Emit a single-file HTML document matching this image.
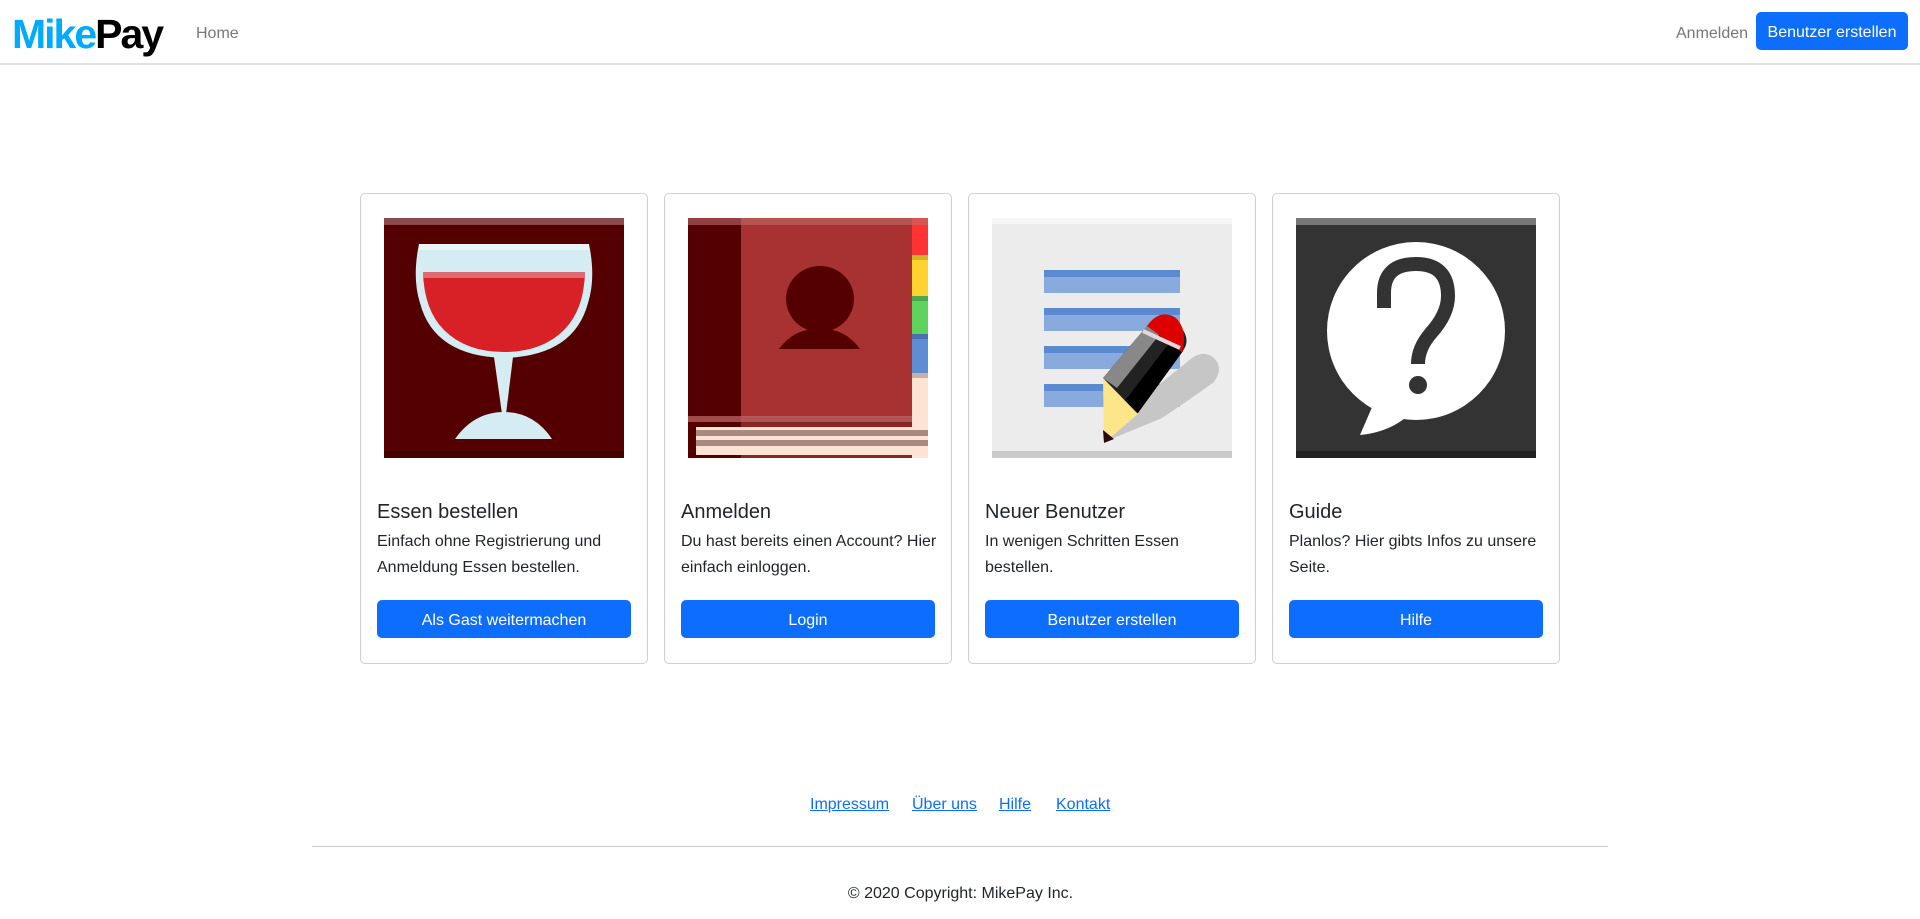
<!DOCTYPE html>
<html><head><meta charset="utf-8"><style>
*{box-sizing:border-box;margin:0;padding:0}
body{width:1920px;height:919px;overflow:hidden;background:#fff;font-family:"Liberation Sans",Arial,sans-serif;color:#212529;position:relative}
.nav{position:absolute;left:0;top:0;width:1920px;height:65px;border-bottom:2px solid #dee2e6}
.logo{position:absolute;left:12px;top:10px;font-size:41px;font-weight:bold;letter-spacing:-2px;line-height:48px}
.logo .a{color:#00aaff}.logo .b{color:#000}
.home{position:absolute;left:196px;top:25px;font-size:16px;color:#777}
.anm{position:absolute;left:1676px;top:25px;font-size:16px;color:#777}
.nbtn{position:absolute;left:1756px;top:12px;width:152px;height:38px;background:#0d6efd;color:#fff;border-radius:5px;font-size:16px;text-align:center;line-height:42px}
.card{position:absolute;top:193px;width:288px;height:471px;border:1px solid #d0d0d0;border-radius:5px}
.card svg{position:absolute;left:23px;top:24px}
.card h5{position:absolute;left:16px;top:306px;font-size:20px;font-weight:normal;line-height:24px}
.card p{position:absolute;left:16px;top:335px;font-size:16px;line-height:26px;width:258px}
.card .btn{position:absolute;left:16px;top:406px;width:254px;height:38px;background:#0d6efd;color:#fff;border-radius:5px;text-align:center;line-height:42px;font-size:16px}
.links a{position:absolute;top:796px;color:#0d6efd;text-decoration:underline;font-size:16px}
.hr{position:absolute;left:312px;top:846px;width:1296px;height:1px;background:#ccc}
.copy{position:absolute;left:0;width:1920px;text-align:center;top:885px;font-size:16px;padding-left:1px}
</style></head><body>
<div class="nav">
<div class="logo"><span class="a">Mike</span><span class="b">Pay</span></div>
<div class="home">Home</div>
<div class="anm">Anmelden</div>
<div class="nbtn">Benutzer erstellen</div>
</div>

<div class="card" style="left:360px">
<svg width="240" height="240" viewBox="0 0 240 240">
<rect width="240" height="240" fill="#550000"/>
<rect width="240" height="7" fill="#8a4a4a"/>
<rect y="233" width="240" height="7" fill="#440000"/>
<path d="M35 26 H205 Q212 60 204 85 Q190 138 120 140 Q50 138 36 85 Q28 60 35 26Z" fill="#d5edf2"/>
<rect x="35" y="26" width="170" height="6" fill="#e8f6f8"/>
<path d="M39 54 H201 Q200 92 180 112 Q158 134 120 134 Q82 134 60 112 Q40 92 39 54Z" fill="#d82027"/>
<rect x="39" y="54" width="162" height="6" fill="#e06a6f"/>
<path d="M110 139 H129 L122 196 H118Z" fill="#d5edf2"/>
<path d="M71 221 Q90 194 120 194 Q150 194 168 221Z" fill="#d5edf2"/>
</svg>
<h5>Essen bestellen</h5>
<p>Einfach ohne Registrierung und Anmeldung Essen bestellen.</p>
<div class="btn">Als Gast weitermachen</div>
</div>

<div class="card" style="left:664px">
<svg width="240" height="240" viewBox="0 0 240 240">
<rect width="240" height="240" fill="#550000"/>
<rect x="53" width="172" height="240" fill="#a83232"/>
<rect x="53" y="199" width="172" height="41" fill="#8a2525"/>
<rect x="224" width="16" height="240" fill="#fde3d3"/>
<rect x="224" y="0" width="16" height="37" fill="#ff3333"/>
<rect x="224" y="37" width="16" height="5" fill="#d6b22a"/>
<rect x="224" y="42" width="16" height="36" fill="#fed22f"/>
<rect x="224" y="78" width="16" height="5" fill="#4ea84e"/>
<rect x="224" y="83" width="16" height="33" fill="#5fd35f"/>
<rect x="224" y="116" width="16" height="5" fill="#4a70b0"/>
<rect x="224" y="121" width="16" height="34" fill="#5f8dd3"/>
<rect x="224" y="155" width="16" height="5" fill="#c8b0a5"/>
<rect width="240" height="7" fill="#c06a6a" opacity=".6"/>
<rect y="198" width="224" height="6" fill="#c06a6a" opacity=".7"/>
<rect x="8" y="209" width="232" height="28" fill="#fde3d3"/>
<rect x="8" y="212" width="232" height="6" fill="#a88a80"/>
<rect x="8" y="222" width="232" height="6" fill="#a88a80"/>
<ellipse cx="132" cy="81" rx="34" ry="33" fill="#550000"/>
<path d="M91 131 Q105 111 132 110 Q158 111 172 131Z" fill="#550000"/>
</svg>
<h5>Anmelden</h5>
<p>Du hast bereits einen Account? Hier einfach einloggen.</p>
<div class="btn">Login</div>
</div>

<div class="card" style="left:968px">
<svg width="240" height="240" viewBox="0 0 240 240">
<rect width="240" height="240" fill="#ececec"/>
<rect width="240" height="6" fill="#f6f6f6"/>
<rect y="233" width="240" height="7" fill="#cbcbcb"/>
<g fill="#88aadd"><rect x="52" y="52" width="136" height="23"/><rect x="52" y="90" width="136" height="23"/><rect x="52" y="128" width="136" height="23"/><rect x="52" y="166" width="136" height="23"/></g>
<g fill="#5a8ad0"><rect x="52" y="52" width="136" height="7"/><rect x="52" y="90" width="136" height="7"/><rect x="52" y="128" width="136" height="7"/><rect x="52" y="166" width="136" height="7"/></g>
<path d="M112 224 L170 200 Q200 180 222 164 Q232 150 222 140 Q210 130 195 144 L120 205Z" fill="#c6c6c6"/>
<path d="M111 160 L155 108 Q170 96 188 108 Q200 122 190 134 L145 196Z" fill="#222"/>
<path d="M111 160 L155 108 L168 116 L125 170Z" fill="#888"/>
<path d="M146 195 L191 133 L178 124 L132 184Z" fill="#000"/>
<path d="M155 108 Q168 90 184 100 Q196 112 190 134 Z" fill="#dd0000"/>
<path d="M151 113 L188 130" stroke="#e6d6da" stroke-width="4"/>
<path d="M111 160 L146 196 L112 225Z" fill="#fde58a"/>
<path d="M111 212 L122 221 L112 225Z" fill="#2a0a0a"/>
</svg>
<h5>Neuer Benutzer</h5>
<p>In wenigen Schritten Essen bestellen.</p>
<div class="btn">Benutzer erstellen</div>
</div>

<div class="card" style="left:1272px">
<svg width="240" height="240" viewBox="0 0 240 240">
<rect width="240" height="240" fill="#333"/>
<rect width="240" height="7" fill="#777"/>
<rect y="233" width="240" height="7" fill="#222"/>
<circle cx="120" cy="113" r="89" fill="#fff"/>
<path d="M80 180 L64 217 Q95 214 115 195 Z" fill="#fff"/>
<path d="M88 90 V75 Q88 46 120 46 Q152 46 152 78 Q152 96 135 115 Q122 130 122 146" fill="none" stroke="#333" stroke-width="14"/>
<ellipse cx="122" cy="167" rx="9" ry="9" fill="#333"/>
</svg>
<h5>Guide</h5>
<p>Planlos? Hier gibts Infos zu unsere Seite.</p>
<div class="btn">Hilfe</div>
</div>

<div class="links">
<a style="left:810px">Impressum</a>
<a style="left:912px">Über uns</a>
<a style="left:999px">Hilfe</a>
<a style="left:1056px">Kontakt</a>
</div>
<div class="hr"></div>
<div class="copy">© 2020 Copyright: MikePay Inc.</div>
</body></html>
